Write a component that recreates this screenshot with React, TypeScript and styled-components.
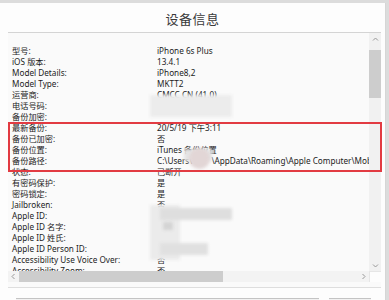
import React from "react";
import styled, { createGlobalStyle } from "styled-components";

const Global = createGlobalStyle`
  html, body { margin: 0; padding: 0; }
  body {
    width: 389px;
    height: 300px;
    overflow: hidden;
    background: #dcdcdc;
    font-family: "Noto Sans", "Noto Sans CJK SC", sans-serif;
  }
`;

const Page = styled.div`
  height: 300px;
  padding-top: 3px;
  box-sizing: border-box;
`;

const Dialog = styled.div`
  position: relative;
  width: 386px;
  height: 297px;
  background: #fdfdfd;
  border-right: 1px solid #d6d6d6;
  box-sizing: border-box;
  display: flex;
  flex-direction: column;
  overflow: hidden;
  & > * { flex-shrink: 0; }
`;

const Title = styled.div`
  height: 29px;
  display: flex;
  align-items: center;
  justify-content: center;
  font-family: "Noto Sans CJK SC", sans-serif;
  font-size: 13px;
  color: #3a3a3a;
  letter-spacing: 0.5px;
  padding-top: 1px;
  box-sizing: border-box;
`;

const ListBox = styled.div`
  margin-left: 8px;
  width: 373px;
  height: 256px;
  border-top: 1px solid #d4d4d4;
  border-bottom: 1px solid #dedede;
  box-sizing: border-box;
  display: grid;
  grid-template-columns: 1fr 12px;
  grid-template-rows: 238px 11px;
  background: #fafafa;
`;

const Content = styled.div`
  overflow: hidden;
  padding-top: 12px;
  box-sizing: border-box;
`;

const Row = styled.div`
  display: grid;
  grid-template-columns: 145px auto;
  height: 11px;
  line-height: 11px;
  font-size: 8.2px;
  color: #1c1c1c;
  white-space: nowrap;
  padding-left: 4px;
  overflow: hidden;
`;

const Cell = styled.span`
  font-family: "Noto Sans", "Noto Sans CJK SC", sans-serif;
  white-space: pre;
`;

const VScroll = styled.div`
  background: #f1f1f1;
  display: flex;
  flex-direction: column;
  align-items: stretch;
`;

const Arrow = styled.div`
  height: 12px;
  display: flex;
  align-items: center;
  justify-content: center;
`;

const VTrack = styled.div`
  flex: 1;
  padding-top: 5px;
`;

const VThumb = styled.div`
  height: 48px;
  background: #cdcdcd;
`;

const HScroll = styled.div`
  background: #f3f3f3;
  display: flex;
  align-items: center;
`;

const HArrow = styled.div`
  width: 11px;
  display: flex;
  align-items: center;
  justify-content: center;
`;

const HTrack = styled.div`
  flex: 1;
  height: 11px;
`;

const HThumb = styled.div`
  width: 204px;
  height: 11px;
  background: #cdcdcd;
`;

const Corner = styled.div`
  background: #fdfdfd;
  border-left: 1px solid #e6e6e6;
  border-top: 1px solid #e6e6e6;
`;

const Buttons = styled.div`
  display: flex;
  gap: 10px;
  padding: 10px 14px 0 16px;
`;

const Btn = styled.div<{ $w: number }>`
  width: ${(p) => p.$w}px;
  height: 4px;
  border-top: 1px solid #c4c4c4;
  background: #f2f2f2;
`;

const Highlight = styled.div`
  position: absolute;
  left: 8px;
  top: 119px;
  width: 374px;
  height: 50px;
  border: 2px solid #e23b42;
  box-sizing: border-box;
  pointer-events: none;
`;

const Blur = styled.div<{ $bg: string; $r?: number }>`
  position: absolute;
  background: ${(p) => p.$bg};
  border-radius: ${(p) => p.$r ?? 1}px;
  filter: blur(1.5px);
`;

const rows: [string, string][] = [
  ["型号:", "iPhone 6s Plus"],
  ["iOS 版本:", "13.4.1"],
  ["Model Details:", "iPhone8,2"],
  ["Model Type:", "MKTT2"],
  ["运营商:", "CMCC CN (41.0)"],
  ["电话号码:", ""],
  ["备份加密:", ""],
  ["最新备份:", "20/5/19 下午3:11"],
  ["备份已加密:", "否"],
  ["备份位置:", "iTunes 备份位置"],
  ["备份路径:", "C:\\Users\\         \\AppData\\Roaming\\Apple Computer\\MobileSync\\Backup"],
  ["状态:", "已断开"],
  ["有密码保护:", "是"],
  ["密码锁定:", "是"],
  ["Jailbroken:", "否"],
  ["Apple ID:", ""],
  ["Apple ID 名字:", ""],
  ["Apple ID 姓氏:", ""],
  ["Apple ID Person ID:", ""],
  ["Accessibility Use Voice Over:", "否"],
  ["Accessibility Zoom:", "否"],
];

const Chev = ({ d }: { d: string }) => (
  <svg width="7" height="5" viewBox="0 0 7 5">
    <path d={d} fill="none" stroke="#999" strokeWidth="1" />
  </svg>
);

export default function App() {
  return (
    <>
      <Global />
      <Page>
        <Dialog>
          <Title>设备信息</Title>
          <ListBox>
            <Content>
              {rows.map(([k, v]) => (
                <Row key={k}>
                  <Cell>{k}</Cell>
                  <Cell>{v}</Cell>
                </Row>
              ))}
            </Content>
            <VScroll>
              <Arrow>
                <Chev d="M1 3.5 L3.5 1 L6 3.5" />
              </Arrow>
              <VTrack>
                <VThumb />
              </VTrack>
              <Arrow>
                <Chev d="M1 1.5 L3.5 4 L6 1.5" />
              </Arrow>
            </VScroll>
            <HScroll>
              <HArrow>
                <svg width="5" height="7" viewBox="0 0 5 7">
                  <path d="M3.5 1 L1 3.5 L3.5 6" fill="none" stroke="#999" />
                </svg>
              </HArrow>
              <HTrack>
                <HThumb />
              </HTrack>
              <HArrow>
                <svg width="5" height="7" viewBox="0 0 5 7">
                  <path d="M1.5 1 L4 3.5 L1.5 6" fill="none" stroke="#999" />
                </svg>
              </HArrow>
            </HScroll>
            <Corner />
          </ListBox>
          <Buttons>
            <Btn $w={304} />
            <Btn $w={42} />
          </Buttons>
          <Blur $bg="#ececec" style={{ left: 150, top: 92, width: 82, height: 22 }} />
          <Blur $bg="#e4e4e4" style={{ left: 184, top: 146, width: 28, height: 12 }} />
          <Blur $bg="#e2d6d6" $r={11} style={{ left: 189, top: 145, width: 21, height: 21 }} />
          <Blur $bg="#ebebeb" style={{ left: 150, top: 202, width: 30, height: 55 }} />
          <Blur $bg="#dedede" style={{ left: 160, top: 205, width: 72, height: 12 }} />
          <Blur $bg="#d4d4d4" style={{ left: 163, top: 219, width: 10, height: 8 }} />
          <Blur $bg="#e0e0e0" style={{ left: 160, top: 240, width: 48, height: 12 }} />
          <Highlight />
        </Dialog>
      </Page>
    </>
  );
}
